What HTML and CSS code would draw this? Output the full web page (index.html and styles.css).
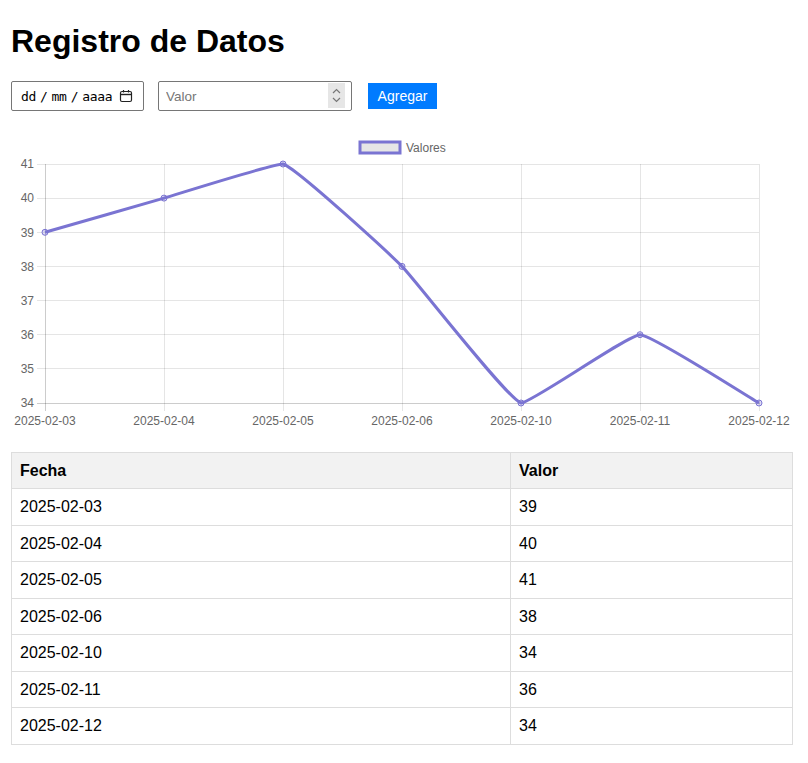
FILE: index.html
```html
<!DOCTYPE html>
<html lang="es">
<head>
<meta charset="utf-8">
<title>Registro de Datos</title>
<link rel="stylesheet" href="styles.css">
</head>
<body>
<div class="page">
  <h1 class="title">Registro de Datos</h1>
  <div class="controls">
    <div class="date-input">
      <span class="date-text"><span>dd</span><span class="sep">/</span><span>mm</span><span class="sep">/</span><span>aaaa</span></span>
      <svg class="cal-icon" width="14" height="14" viewBox="0 0 14 14">
        <rect x="1.5" y="2.5" width="11" height="10" rx="1.5" fill="none" stroke="#222" stroke-width="1.2"/>
        <line x1="1.5" y1="5.5" x2="12.5" y2="5.5" stroke="#222" stroke-width="1.4"/>
        <line x1="4.5" y1="1" x2="4.5" y2="3.5" stroke="#222" stroke-width="1.2"/>
        <line x1="9.5" y1="1" x2="9.5" y2="3.5" stroke="#222" stroke-width="1.2"/>
      </svg>
    </div>
    <div class="num-input">
      <input class="num-field" type="text" placeholder="Valor">
      <span class="spinner">
        <svg width="17" height="25" viewBox="0 0 17 25">
          <rect x="0" y="0" width="17" height="25" fill="#e6e6e6"/>
          <polyline points="5,10 8.5,6.5 12,10" fill="none" stroke="#777" stroke-width="1.2"/>
          <polyline points="5,15 8.5,18.5 12,15" fill="none" stroke="#777" stroke-width="1.2"/>
        </svg>
      </span>
    </div>
    <button class="add-btn" type="button">Agregar</button>
  </div>

  <svg class="chart" width="782" height="302" viewBox="11 130 782 302">
    <g class="legend">
      <rect x="360" y="142" width="40" height="11" fill="#e6e6e6" stroke="#7a74d2" stroke-width="3"/>
      <text x="406" y="151.5" class="lbl">Valores</text>
    </g>
    <g stroke="rgba(0,0,0,0.1)" stroke-width="1" shape-rendering="crispEdges">
      <line x1="37" y1="164.5" x2="759" y2="164.5"/>
      <line x1="37" y1="198.5" x2="759" y2="198.5"/>
      <line x1="37" y1="232.5" x2="759" y2="232.5"/>
      <line x1="37" y1="266.5" x2="759" y2="266.5"/>
      <line x1="37" y1="300.5" x2="759" y2="300.5"/>
      <line x1="37" y1="334.5" x2="759" y2="334.5"/>
      <line x1="37" y1="368.5" x2="759" y2="368.5"/>
      <line x1="164.5" y1="164" x2="164.5" y2="411"/>
      <line x1="283.5" y1="164" x2="283.5" y2="411"/>
      <line x1="402.5" y1="164" x2="402.5" y2="411"/>
      <line x1="521.5" y1="164" x2="521.5" y2="411"/>
      <line x1="640.5" y1="164" x2="640.5" y2="411"/>
      <line x1="759.5" y1="164" x2="759.5" y2="411"/>
    </g>
    <g stroke="rgba(0,0,0,0.2)" stroke-width="1" shape-rendering="crispEdges">
      <line x1="45.5" y1="164" x2="45.5" y2="411"/>
      <line x1="37" y1="403.5" x2="760" y2="403.5"/>
    </g>
    <g class="lbl" text-anchor="end">
      <text x="34" y="168">41</text>
      <text x="34" y="202">40</text>
      <text x="34" y="236.5">39</text>
      <text x="34" y="270.5">38</text>
      <text x="34" y="304.5">37</text>
      <text x="34" y="338.5">36</text>
      <text x="34" y="373">35</text>
      <text x="34" y="407">34</text>
    </g>
    <g class="lbl" text-anchor="middle">
      <text x="45" y="424.5">2025-02-03</text>
      <text x="164" y="424.5">2025-02-04</text>
      <text x="283" y="424.5">2025-02-05</text>
      <text x="402" y="424.5">2025-02-06</text>
      <text x="521" y="424.5">2025-02-10</text>
      <text x="640" y="424.5">2025-02-11</text>
      <text x="759" y="424.5">2025-02-12</text>
    </g>
    <path d="M45,232.3 C56.9,228.9 152.1,201.5 164,198.1 C175.9,194.7 272.5,164 283,164 C296.3,167.8 391,255.3 402,266.4 C414.8,279.2 507.5,399.1 521,403 C531.3,403 628.1,334.7 640,334.7 C651.9,334.7 747.1,396.2 759,403" fill="none" stroke="#7a74d2" stroke-width="3" stroke-linejoin="round"/>
    <g fill="rgba(122,116,210,0.25)" stroke="#7a74d2" stroke-width="1">
      <circle cx="45" cy="232.3" r="3"/>
      <circle cx="164" cy="198.1" r="3"/>
      <circle cx="283" cy="164" r="3"/>
      <circle cx="402" cy="266.4" r="3"/>
      <circle cx="521" cy="403" r="3"/>
      <circle cx="640" cy="334.7" r="3"/>
      <circle cx="759" cy="403" r="3"/>
    </g>
  </svg>

  <table class="data-table">
    <thead>
      <tr><th class="col-date">Fecha</th><th>Valor</th></tr>
    </thead>
    <tbody>
      <tr><td>2025-02-03</td><td>39</td></tr>
      <tr><td>2025-02-04</td><td>40</td></tr>
      <tr><td>2025-02-05</td><td>41</td></tr>
      <tr><td>2025-02-06</td><td>38</td></tr>
      <tr><td>2025-02-10</td><td>34</td></tr>
      <tr><td>2025-02-11</td><td>36</td></tr>
      <tr><td>2025-02-12</td><td>34</td></tr>
    </tbody>
  </table>
</div>
</body>
</html>
```

FILE: styles.css
```css
html, body {
  margin: 0;
  padding: 0;
  background: #fff;
}

body {
  font-family: "Liberation Sans", Arial, sans-serif;
  color: #000;
}

.page {
  width: 782px;
  margin-left: 11px;
}

.title {
  font-family: "Liberation Sans", Arial, sans-serif;
  font-size: 32px;
  font-weight: bold;
  line-height: 34px;
  margin: 24px 0 23px;
}

.controls {
  display: flex;
  align-items: center;
  height: 30px;
}

.date-input {
  box-sizing: border-box;
  width: 133px;
  height: 30px;
  border: 1px solid #767676;
  border-radius: 2px;
  display: flex;
  align-items: center;
  padding: 0 10px 0 9px;
  justify-content: space-between;
}

.date-text {
  display: flex;
  align-items: center;
  gap: 4px;
  font-family: "DejaVu Sans Mono", "Liberation Mono", monospace;
  font-size: 13px;
  letter-spacing: -0.3px;
  white-space: nowrap;
  color: #000;
}

.cal-icon {
  display: block;
  flex: none;
}

.num-input {
  position: relative;
  box-sizing: border-box;
  width: 194px;
  height: 30px;
  border: 1px solid #767676;
  border-radius: 2px;
  margin-left: 14px;
}

.num-field {
  box-sizing: border-box;
  width: 100%;
  height: 100%;
  border: none;
  outline: none;
  background: transparent;
  padding: 0 7px;
  font-family: "Liberation Sans", Arial, sans-serif;
  font-size: 13.5px;
}

.num-field::placeholder {
  color: #777;
}

.spinner {
  position: absolute;
  right: 6px;
  top: 1px;
  width: 17px;
  height: 25px;
}

.spinner svg {
  display: block;
}

.add-btn {
  box-sizing: border-box;
  width: 69px;
  height: 26px;
  margin-left: 16px;
  border: none;
  border-radius: 0;
  background: #007bff;
  color: #fff;
  font-family: "Liberation Sans", Arial, sans-serif;
  font-size: 14px;
  padding: 0;
}

.chart {
  display: block;
  margin-top: 19px;
}

.lbl {
  font-family: "Liberation Sans", Arial, sans-serif;
  font-size: 12px;
  fill: #666;
}

.data-table {
  width: 782px;
  margin-top: 20px;
  border-collapse: collapse;
  border: 1px solid #ddd;
  font-size: 16px;
}

.data-table th,
.data-table td {
  border: 1px solid #ddd;
  padding: 8px;
  text-align: left;
  line-height: 19.5px;
}

.data-table th {
  background: #f2f2f2;
  font-weight: bold;
  line-height: 19px;
}

.col-date {
  width: 482px;
}
```
